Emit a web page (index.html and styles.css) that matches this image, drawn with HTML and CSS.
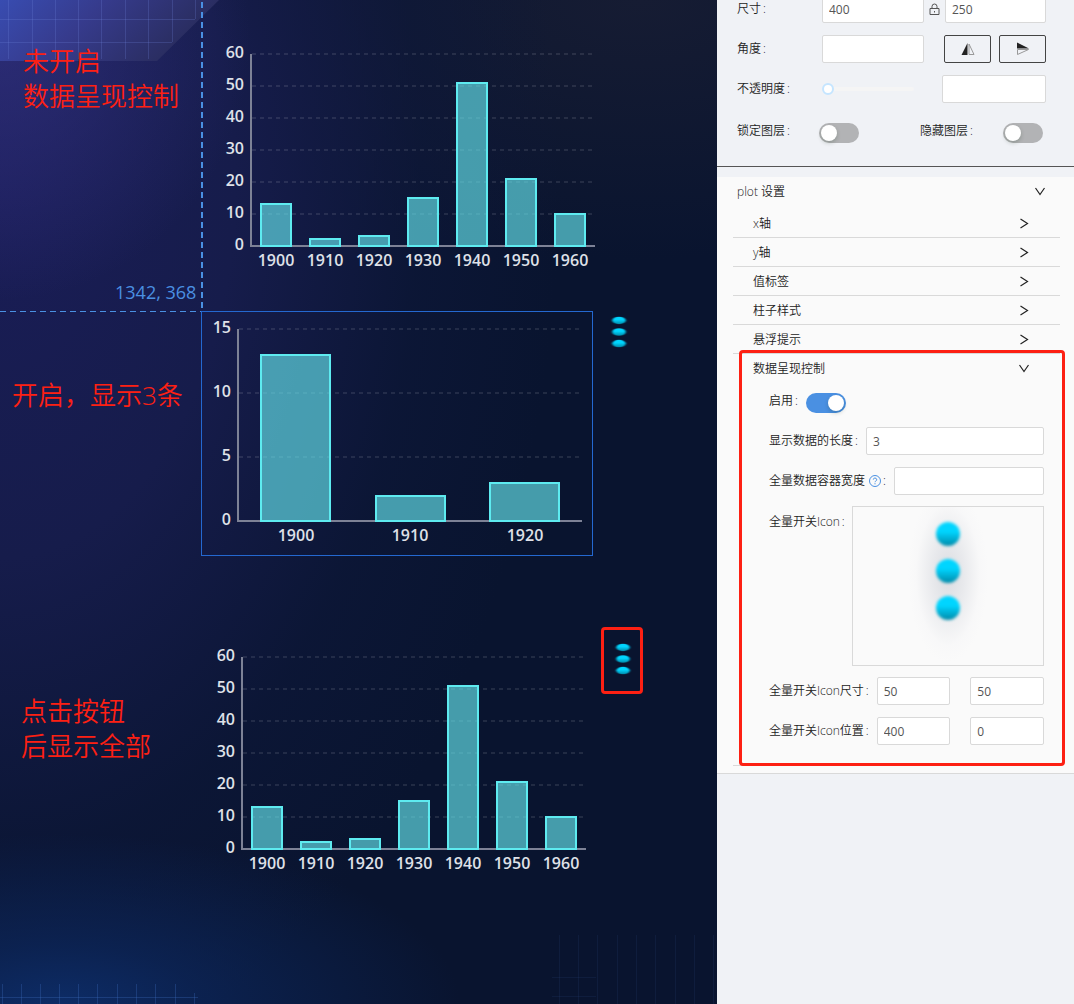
FILE: index.html
```html
<!DOCTYPE html>
<html lang="zh-CN">
<head>
<meta charset="utf-8">
<meta name="viewport" content="width=device-width, initial-scale=1">
<title>plot 设置</title>
<link rel="stylesheet" href="styles.css">
</head>
<body>
<svg class="defs" aria-hidden="true">
  <defs>
    <linearGradient id="dot-fill" x1="0" y1="0" x2="0" y2="1">
      <stop offset="0.4" stop-color="#00d5ff"/>
      <stop offset="1" stop-color="#0089a8"/>
    </linearGradient>
    <filter id="dot-soft" x="-30%" y="-30%" width="160%" height="160%"><feGaussianBlur stdDeviation="1.6"/></filter>
    <symbol id="dots" viewBox="0 0 160 160" preserveAspectRatio="none">
      <g fill="url(#dot-fill)" filter="url(#dot-soft)">
        <circle cx="80" cy="27" r="12"/>
        <circle cx="80" cy="64" r="12"/>
        <circle cx="80" cy="101" r="12"/>
      </g>
    </symbol>
    <symbol id="arrow" viewBox="0 0 12 12"><path d="M2.500 1 9.500 5.500l-7 4.500" fill="none" stroke="currentColor" stroke-width="1.2"/></symbol>
    <symbol id="arrow-down" viewBox="0 0 12 12"><path d="M1.500 2 6 8.500l4.500-6.500" fill="none" stroke="currentColor" stroke-width="1.2"/></symbol>
  </defs>
</svg>
<div class="app">
  <main class="canvas">
    <svg class="deco deco-top" width="220" height="62" viewBox="0 0 220 62" aria-hidden="true">
      <defs>
        <linearGradient id="deco-fill" x1="0" y1="0" x2="1" y2="0.300">
          <stop offset="0" stop-color="#3a50b8"/>
          <stop offset="0.450" stop-color="#383d90"/>
          <stop offset="1" stop-color="#2a2d5c"/>
        </linearGradient>
      </defs>
      <path d="M0 0H219L157 61H0z" fill="url(#deco-fill)" opacity=".9"/>
      <path d="M8.500 0V59M32.500 0V59M55.500 0V59M78.500 0V59M101.500 0V59M125.500 0V59M148.500 0V59M172.500 0V42M195.500 0V19M0 19.500H195M0 42.500H172" stroke="#6f86dc" stroke-opacity=".24" fill="none"/>
    </svg>
    <svg class="deco deco-left" width="210" height="20" viewBox="0 0 210 20" aria-hidden="true">
      <path d="M2.500 0V20M21.500 0V20M40.500 0V20M59.500 0V20M78.500 0V20M97.500 0V20M117.500 0V20M136.500 0V20M155.500 0V20M175.500 0V20M194.500 9V20M0 13.500H198" stroke="#3f70c4" stroke-opacity=".3" fill="none"/>
    </svg>
    <svg class="deco deco-right" width="165" height="69" viewBox="0 0 165 69" aria-hidden="true">
      <path d="M7.500 0V69M26.500 0V69M45.500 0V69M65.500 0V69M84.500 0V69M103.500 0V69M123.500 0V69M142.500 0V69M161.500 0V69M0 42.500H44M0 61.500H44" stroke="#2a4680" stroke-opacity=".18" fill="none"/>
    </svg>

    <div class="guide guide-v"></div>
    <div class="guide guide-h"></div>
    <span class="coords">1342, 368</span>

    <p class="note note-1">未开启<br>数据呈现控制</p>
    <p class="note note-2">开启，显示3条</p>
    <p class="note note-3">点击按钮<br>后显示全部</p>

    <svg class="chart chart-1" width="392" height="245" viewBox="0 0 392 245">
      <path class="grid" d="M38 18H381M38 50H381M38 82H381M38 114H381M38 146H381M38 178H381"/>
      <path class="axis" d="M37 18V210H381"/>
      <g class="bars">
        <rect x="47" y="168" width="30" height="42"/><rect x="96" y="203" width="30" height="7"/><rect x="145" y="200" width="30" height="10"/><rect x="194" y="162" width="30" height="48"/><rect x="243" y="47" width="30" height="163"/><rect x="292" y="143" width="30" height="67"/><rect x="341" y="178" width="30" height="32"/>
      </g>
      <g class="y-labels"><text x="30" y="22">60</text><text x="30" y="54">50</text><text x="30" y="86">40</text><text x="30" y="118">30</text><text x="30" y="150">20</text><text x="30" y="182">10</text><text x="30" y="214">0</text></g>
      <g class="x-labels"><text x="62" y="230">1900</text><text x="111" y="230">1910</text><text x="160" y="230">1920</text><text x="209" y="230">1930</text><text x="258" y="230">1940</text><text x="307" y="230">1950</text><text x="356" y="230">1960</text></g>
    </svg>

    <svg class="chart chart-2" width="392" height="245" viewBox="0 0 392 245">
      <path class="grid" d="M38 18H381M38 82H381M38 146H381"/>
      <path class="axis" d="M37 18V210H381"/>
      <g class="bars">
        <rect x="60" y="44" width="69" height="166"/><rect x="175" y="185" width="69" height="25"/><rect x="289" y="172" width="69" height="38"/>
      </g>
      <g class="y-labels"><text x="30" y="22">15</text><text x="30" y="86">10</text><text x="30" y="150">5</text><text x="30" y="214">0</text></g>
      <g class="x-labels"><text x="95" y="230">1900</text><text x="209" y="230">1910</text><text x="324" y="230">1920</text></g>
    </svg>
    <svg class="more more-2" aria-hidden="true"><use href="#dots"/></svg>

    <svg class="chart chart-3" width="392" height="245" viewBox="0 0 392 245">
      <path class="grid" d="M38 18H381M38 50H381M38 82H381M38 114H381M38 146H381M38 178H381"/>
      <path class="axis" d="M37 18V210H381"/>
      <g class="bars">
        <rect x="47" y="168" width="30" height="42"/><rect x="96" y="203" width="30" height="7"/><rect x="145" y="200" width="30" height="10"/><rect x="194" y="162" width="30" height="48"/><rect x="243" y="47" width="30" height="163"/><rect x="292" y="143" width="30" height="67"/><rect x="341" y="178" width="30" height="32"/>
      </g>
      <g class="y-labels"><text x="30" y="22">60</text><text x="30" y="54">50</text><text x="30" y="86">40</text><text x="30" y="118">30</text><text x="30" y="150">20</text><text x="30" y="182">10</text><text x="30" y="214">0</text></g>
      <g class="x-labels"><text x="62" y="230">1900</text><text x="111" y="230">1910</text><text x="160" y="230">1920</text><text x="209" y="230">1930</text><text x="258" y="230">1940</text><text x="307" y="230">1950</text><text x="356" y="230">1960</text></g>
    </svg>
    <svg class="more more-3" aria-hidden="true"><use href="#dots"/></svg>
    <div class="frame frame-icon"></div>
  </main>

  <aside class="panel">
    <form class="layer">
      <div class="row">
        <label class="name" for="w">尺寸<span class="colon">:</span></label>
        <input class="field size" id="w" type="text" value="400">
        <svg class="lock" width="11" height="12" viewBox="0 0 11 12" aria-hidden="true"><path d="M1 5.500h9v6H1zM3 5.500V3.500a2.500 2.500 0 0 1 5 0v2M5.500 8v1.500" fill="none" stroke="#555"/></svg>
        <input class="field size" type="text" value="250" aria-label="高">
      </div>
      <div class="row">
        <label class="name" for="angle">角度<span class="colon">:</span></label>
        <input class="field size" id="angle" type="text">
        <div class="flips">
          <button class="flip" type="button" aria-label="水平翻转"><svg width="14" height="14" viewBox="0 0 14 14"><path d="M6.500 1v12H0.500z" fill="#222"/><path d="M8 2v10.500h5z" fill="none" stroke="#999"/></svg></button>
          <button class="flip" type="button" aria-label="垂直翻转"><svg width="14" height="14" viewBox="0 0 14 14"><path d="M1 0.500v6h12z" fill="#222"/><path d="M1.500 7.500h11l-11 5z" fill="none" stroke="#999"/></svg></button>
        </div>
      </div>
      <div class="row">
        <label class="name" for="opacity">不透明度<span class="colon">:</span></label>
        <input class="slider" id="opacity" type="range" min="0" max="100" value="0">
        <input class="field opacity" type="text" aria-label="不透明度值">
      </div>
      <div class="row toggles">
        <label class="name" for="locked">锁定图层<span class="colon">:</span></label>
        <input class="switch" id="locked" type="checkbox">
        <label class="name second" for="hidden">隐藏图层<span class="colon">:</span></label>
        <input class="switch" id="hidden" type="checkbox">
      </div>
    </form>

    <section class="plot">
      <h2 class="plot-title">plot 设置<svg class="icon"><use href="#arrow-down"/></svg></h2>
      <ul class="groups">
        <li class="group"><button class="group-head" type="button">x轴<svg class="icon"><use href="#arrow"/></svg></button></li>
        <li class="group"><button class="group-head" type="button">y轴<svg class="icon"><use href="#arrow"/></svg></button></li>
        <li class="group"><button class="group-head" type="button">值标签<svg class="icon"><use href="#arrow"/></svg></button></li>
        <li class="group"><button class="group-head" type="button">柱子样式<svg class="icon"><use href="#arrow"/></svg></button></li>
        <li class="group"><button class="group-head" type="button">悬浮提示<svg class="icon"><use href="#arrow"/></svg></button></li>
        <li class="group">
          <button class="group-head" type="button" aria-expanded="true">数据呈现控制<svg class="icon"><use href="#arrow-down"/></svg></button>
          <form class="settings">
            <div class="row enable">
              <label for="enable">启用<span class="colon">:</span></label>
              <input class="switch" id="enable" type="checkbox" checked>
            </div>
            <div class="row">
              <label for="len">显示数据的长度<span class="colon">:</span></label>
              <input class="field grow" id="len" type="text" value="3">
            </div>
            <div class="row">
              <label for="full-w">全量数据容器宽度<svg class="help" width="12" height="12" viewBox="0 0 12 12" aria-hidden="true"><circle cx="6" cy="6" r="5.500" fill="none" stroke="#4a90e2"/><path d="M4.300 4.600a1.700 1.600 0 1 1 2.400 1.500q-.7.400-.7 1.100M6 8.200v1.100" fill="none" stroke="#4a90e2"/></svg><span class="colon">:</span></label>
              <input class="field grow" id="full-w" type="text">
            </div>
            <div class="row picture">
              <span class="picture-name">全量开关Icon<span class="colon">:</span></span>
              <div class="preview"><svg class="preview-dots"><use href="#dots"/></svg></div>
            </div>
            <div class="row">
              <label for="icon-w">全量开关Icon尺寸<span class="colon">:</span></label>
              <div class="pair"><input class="field" id="icon-w" type="text" value="50"><input class="field" type="text" value="50" aria-label="Icon高"></div>
            </div>
            <div class="row">
              <label for="icon-x">全量开关Icon位置<span class="colon">:</span></label>
              <div class="pair"><input class="field" id="icon-x" type="text" value="400"><input class="field" type="text" value="0" aria-label="Icon纵向位置"></div>
            </div>
          </form>
          <div class="frame frame-group"></div>
        </li>
      </ul>
    </section>
  </aside>
</div>
</body>
</html>
```
FILE: styles.css
```css
* { box-sizing: border-box; }

body {
  margin: 0;
  font: 350 12px/16px "Open Sans", "Noto Sans CJK SC", sans-serif;
  color: #222;
  background: #f0f2f6;
}

.defs { position: absolute; width: 0; height: 0; }

.app {
  display: grid;
  grid-template-columns: minmax(0, 1fr) 357px;
  min-height: 100vh;
}

/* Canvas */
.canvas {
  position: relative;
  overflow: hidden;
  background:
    radial-gradient(ellipse 400px 170px at 60px 100%, #0d2c66 0, rgba(12, 38, 90, .75) 35%, rgba(10, 26, 64, 0) 100%),
    radial-gradient(ellipse 250px 260px at 0 40px, rgba(56, 54, 140, .6) 0, rgba(40, 42, 110, 0) 100%),
    radial-gradient(ellipse 560px 900px at 0 180px, #1a1d57 0, #161c4b 42%, rgba(14, 24, 60, .5) 75%, rgba(10, 21, 48, 0) 100%),
    radial-gradient(ellipse 500px 260px at 640px 0, #161c33 0, rgba(9, 20, 47, 0) 100%),
    #09142f;
}

.deco { position: absolute; }
.deco-top { left: 0; top: 0; }
.deco-left { left: 0; bottom: 0; }
.deco-right { right: 0; bottom: 0; }

.guide { position: absolute; }
.guide-v {
  left: 201px;
  top: 0;
  width: 2px;
  height: 311px;
  background: repeating-linear-gradient(to bottom, transparent 0 2px, #4a90e2 2px 8px, transparent 8px 10px);
}
.guide-h {
  left: 0;
  top: 311px;
  width: 201px;
  height: 1px;
  background: repeating-linear-gradient(to right, #4a90e2 0 6px, transparent 6px 10px);
}

.coords {
  position: absolute;
  left: 115px;
  top: 280px;
  font-size: 18px;
  font-weight: 400;
  line-height: 24px;
  color: #4a90e2;
}

.note {
  position: absolute;
  margin: 0;
  font-size: 26px;
  line-height: 35px;
  color: #fd2013;
  white-space: nowrap;
}
.note-1 { left: 23px; top: 44px; }
.note-2 { left: 12px; top: 378px; }
.note-3 { left: 21px; top: 694px; }

.chart { position: absolute; }
.chart-1 { left: 214px; top: 36px; }
.chart-2 { left: 201px; top: 311px; outline: 1px solid #2468d0; outline-offset: -1px; }
.chart-3 { left: 205px; top: 639px; }
.chart text { font-size: 16px; font-weight: 600; fill: #dfe1e8; }
.y-labels { text-anchor: end; }
.x-labels { text-anchor: middle; }
.grid { fill: none; stroke: #fff; stroke-opacity: .2; stroke-dasharray: 4 4; }
.axis { fill: none; stroke: #7d8296; stroke-width: 2; }
.bars { fill: #65e5ee; fill-opacity: .65; stroke: #5eebf0; stroke-width: 2; }

.more { position: absolute; width: 90px; height: 50px; }
.more-2 { left: 574px; top: 312px; }
.more-3 { left: 578px; top: 639px; }

.frame { position: absolute; border: 3px solid #fd2013; border-radius: 4px; pointer-events: none; }
.frame-icon { left: 601px; top: 627px; width: 42px; height: 67px; }
.frame-group { inset: -4px -5px -1px 6px; }

/* Panel, scrolled a little past its first row */
.panel { min-width: 0; margin-top: -5px; }

.layer {
  display: flex;
  flex-direction: column;
  gap: 12px;
  padding: 0 28px 23px 20px;
  border-bottom: 1px solid #555;
}

.row { display: flex; align-items: center; min-height: 28px; }
.name { flex: none; width: 85px; }
.colon { margin: 0 8px 0 2px; }

.field {
  height: 28px;
  min-width: 0;
  padding: 0 6px;
  border: 1px solid #d9d9d9;
  border-radius: 2px;
  background: #fff;
  font: inherit;
  font-weight: 400;
  color: #555;
}
.size { width: 102px; flex: none; }
.lock { flex: none; margin: 0 5px; }
.lock + .size { flex: 1; }
.flips { display: flex; gap: 8px; margin-left: auto; }
.flip {
  display: flex;
  align-items: center;
  justify-content: center;
  width: 47px;
  height: 28px;
  padding: 0;
  border: 1px solid #444;
  border-radius: 2px;
  background: transparent;
}

.slider { appearance: none; width: 92px; height: 12px; margin: 0; background: transparent; }
.slider::-webkit-slider-runnable-track { height: 4px; border-radius: 2px; background: #f5f5f5; }
.slider::-webkit-slider-thumb {
  appearance: none;
  width: 12px;
  height: 12px;
  margin-top: -4px;
  border: 2px solid #c5e5ff;
  border-radius: 50%;
  background: #fff;
}
.opacity { width: 104px; margin-left: auto; }

.toggles { align-items: flex-start; min-height: 20px; margin: 8px 3px 0 0; }
.toggles .name { width: 82px; }
.toggles .second { width: 83px; margin-left: auto; }

.switch {
  appearance: none;
  flex: none;
  width: 40px;
  height: 20px;
  margin: 0;
  border-radius: 10px;
  background: #b2b3b5;
}
.switch::before {
  content: "";
  display: block;
  width: 16px;
  height: 16px;
  margin: 2px;
  border-radius: 50%;
  background: #fff;
  box-shadow: 0 2px 4px rgba(0, 35, 11, .2);
}
.switch:checked { background: #4a90e2; }
.switch:checked::before { margin-left: 22px; }

.plot {
  margin-top: 10px;
  padding-bottom: 7px;
  border-bottom: 1px solid #d9d9d9;
  background: #fafafa;
}
.plot-title {
  display: flex;
  justify-content: space-between;
  align-items: center;
  height: 30px;
  margin: 0 0 2px;
  padding: 0 28px 0 20px;
  font-size: 12px;
  font-weight: 350;
}
.icon { width: 12px; height: 12px; flex: none; color: #222; }

.groups { list-style: none; margin: 0 14px 0 16px; padding: 0; }
.group { position: relative; border-bottom: 1px solid #d9d9d9; }
.group-head {
  display: flex;
  justify-content: space-between;
  align-items: center;
  width: 100%;
  height: 28px;
  padding: 1px 30px 0 20px;
  border: 0;
  background: none;
  font: inherit;
  color: inherit;
  text-align: left;
}

.settings {
  display: flex;
  flex-direction: column;
  gap: 12px;
  padding: 11px 16px 20px 36px;
}
.settings label { flex: none; display: flex; align-items: center; }
.enable { align-items: flex-start; min-height: 22px; }
.help { margin-left: 4px; }
.grow { flex: 1; }
.picture { align-items: flex-start; justify-content: space-between; }
.picture-name { flex: 1 0 0; min-width: 0; padding-top: 7px; white-space: nowrap; }
.picture-name .colon { margin-right: 0; }
.preview {
  flex: none;
  width: 192px;
  height: 160px;
  margin: -1px 0;
  border: 1px solid #d9d9d9;
  background:
    radial-gradient(ellipse 40px 88px at 50% 43%, rgba(205, 208, 215, .7) 0, rgba(215, 217, 223, .5) 40%, rgba(240, 240, 243, .2) 80%, rgba(250, 250, 250, 0) 100%);
}
.preview-dots { display: block; width: 160px; height: 160px; margin: 0 auto; }
.pair { display: flex; flex: 1; gap: 20px; }
.pair .field { flex: 1; width: 0; }
```
